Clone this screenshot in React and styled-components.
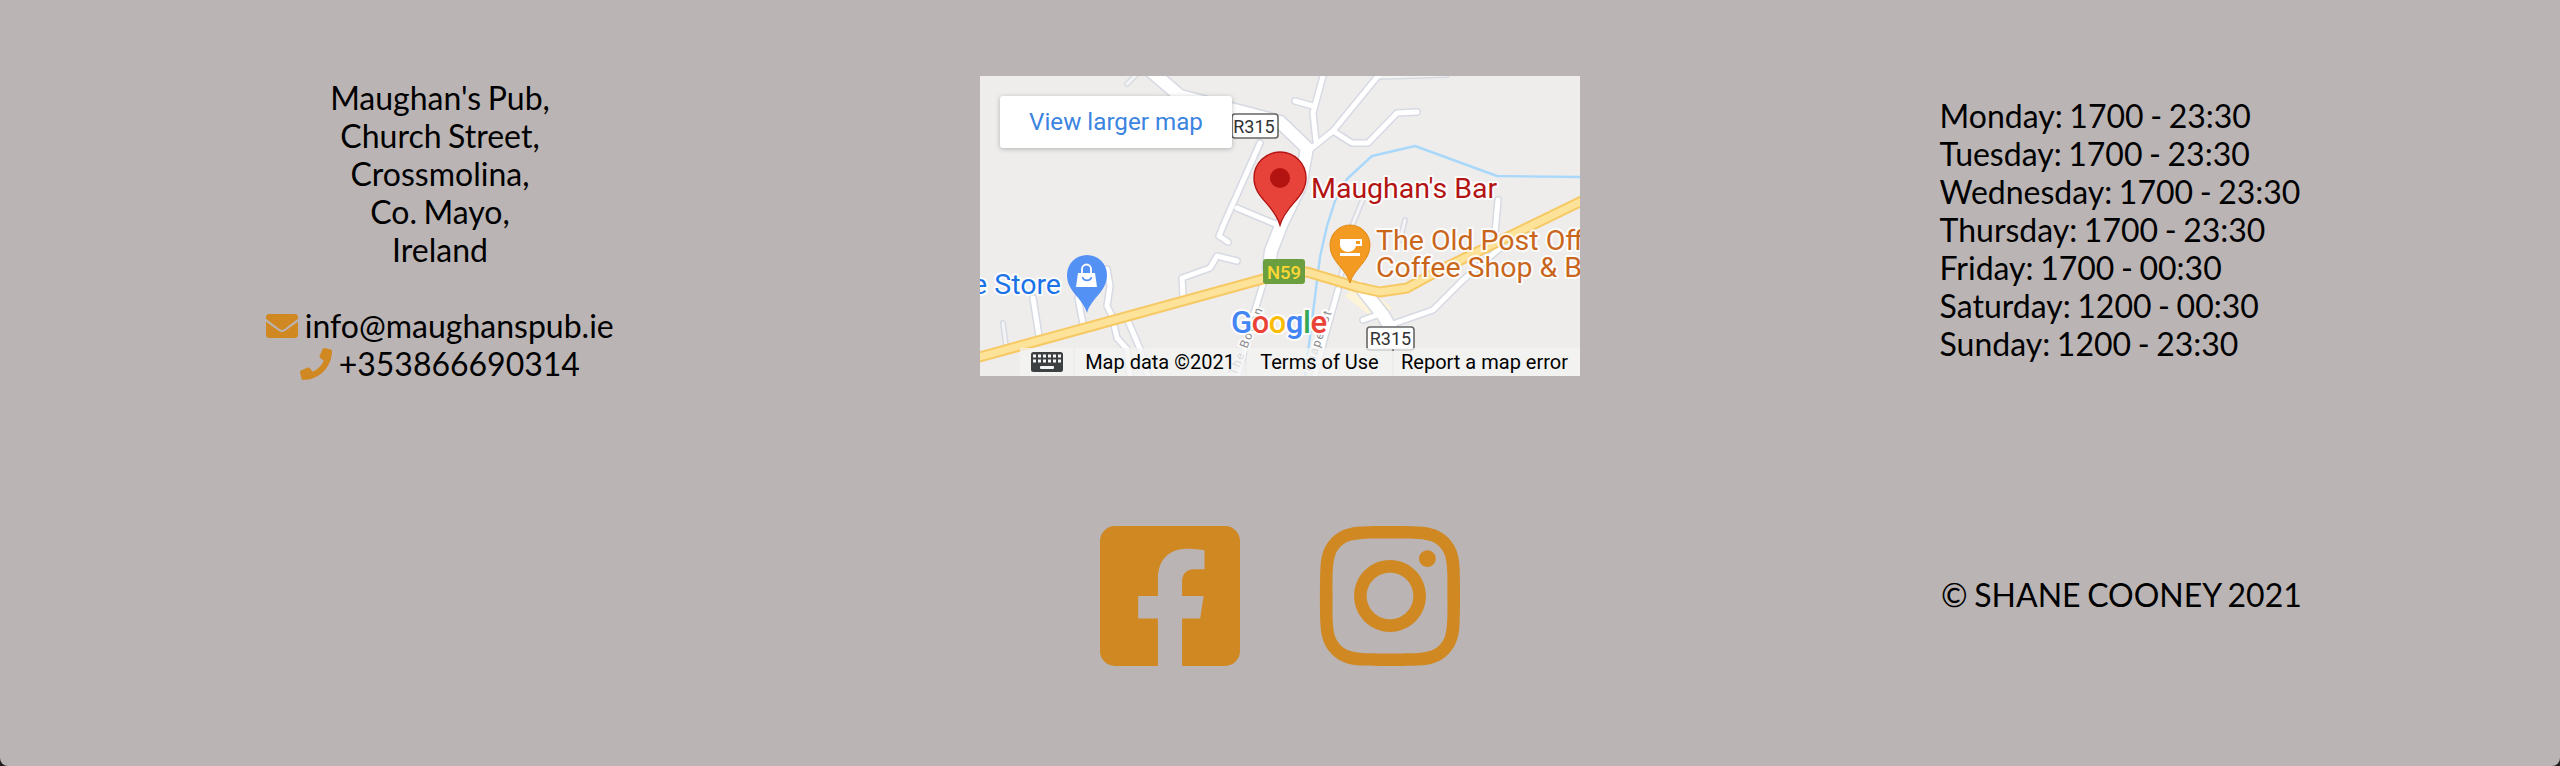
import React from 'react';
import styled, { createGlobalStyle } from 'styled-components';
import { FaEnvelope, FaPhone, FaFacebookSquare, FaInstagram } from 'react-icons/fa';

const GlobalStyle = createGlobalStyle`
  html, body {
    margin: 0;
    padding: 0;
    background: #1f1d1d;
  }
`;

const Footer = styled.footer`
  box-sizing: border-box;
  height: 766px;
  padding: 74px 20px 0;
  background: #bab4b4;
  border-radius: 0 0 8px 8px;
  overflow: hidden;
  color: #000;
  font-family: Lato, "Open Sans", sans-serif;
  font-size: 32px;
  line-height: 38px;
  word-spacing: -1.6px;
  display: grid;
  grid-template-columns: repeat(3, 840px);
  grid-template-rows: 304px 160px;
  row-gap: 138px;
`;

const Column = styled.div`
  display: flex;
  align-items: center;
  justify-content: center;
`;

const Contact = styled.div`
  text-align: center;
  padding-top: 9px;
`;

const Address = styled.address`
  font-style: normal;
  margin-bottom: 38px;
`;

const ContactRow = styled.div`
  svg {
    color: #d08823;
    vertical-align: -0.125em;
  }
`;

const Hours = styled.div`
  text-align: left;
  padding-top: 8px;
`;

const Copyright = styled.div`
  width: 358px;
  white-space: nowrap;
  padding-bottom: 3px;
`;

const Socials = styled.div`
  display: flex;
  gap: 60px;
  color: #d08823;
`;

const MapFrame = styled.div`
  position: relative;
  width: 600px;
  height: 300px;
  background: #eeedec;
  overflow: hidden;
  word-spacing: normal;
  svg {
    display: block;
  }
`;

const LargerMap = styled.a`
  position: absolute;
  left: 20px;
  top: 20px;
  width: 232px;
  height: 52px;
  display: flex;
  align-items: center;
  justify-content: center;
  background: #fff;
  border-radius: 3px;
  box-shadow: 0 1px 5px rgba(0, 0, 0, 0.25);
  color: #3b84df;
  font: 400 24.2px/1 Roboto, sans-serif;
`;

const Attribution = styled.div`
  position: absolute;
  left: 40px;
  right: 0;
  bottom: 0;
  height: 28px;
  display: flex;
  gap: 2px;
  font: 400 20px/28px Roboto, sans-serif;
  color: #000;
`;

const AttributionItem = styled.span`
  box-sizing: border-box;
  display: flex;
  align-items: center;
  justify-content: center;
  width: ${(p) => p.$width}px;
  padding-right: ${(p) => p.$inset || 0}px;
  background: rgba(243, 243, 243, 0.75);
  white-space: nowrap;
`;

const MapLabel = styled.text`
  font-family: Roboto, sans-serif;
  font-size: ${(p) => p.$size || 28.5}px;
  font-weight: ${(p) => p.$weight || 400};
  fill: ${(p) => p.$color};
  stroke: #fff;
  stroke-width: 4px;
  stroke-opacity: 0.85;
  stroke-linejoin: round;
  paint-order: stroke;
`;

const ShieldText = styled.text`
  font-family: Roboto, sans-serif;
  font-size: ${(p) => p.$size}px;
  font-weight: ${(p) => p.$weight || 400};
  fill: ${(p) => p.$color};
  text-anchor: middle;
`;

const hours = [
  'Monday: 1700 - 23:30',
  'Tuesday: 1700 - 23:30',
  'Wednesday: 1700 - 23:30',
  'Thursday: 1700 - 23:30',
  'Friday: 1700 - 00:30',
  'Saturday: 1200 - 00:30',
  'Sunday: 1200 - 23:30',
];

const wideRoads = [
  '172,-4 200,20 270,38 300,46 327,72 320,110 302,147 291,175 289,192',
  '383,214 403,239 416,262',
];

const roads = [
  '343,0 333,37 336,65',
  '315,25 333,30',
  '398,0 353,55 328,75',
  '353,55 372,67 388,67 417,37 437,36',
  '280,67 243,150 239,160 248,166',
  '257,132 300,150',
  '203,220 202,202 230,192 237,180 257,185',
  '127,193 130,210 127,230 132,240 137,262 147,273 150,300',
  '148,245 160,273 168,300',
  '53,222 59,260',
  '98,222 103,248',
  '410,249 453,234 483,204 520,172',
  '518,124 515,157',
  '383,244 397,239',
  '283,208 270,250 258,300',
  '358,214 345,260 335,300',
];

const faintRoads = [
  '147,8 157,-2',
  '23,247 26,270',
  '425,144 420,164',
  '383,123 372,150 358,214',
  '398,1 467,-1',
];

const highway = '-4,282 283,203 327,196 377,211 400,216 427,212 460,194 604,124';
const river = '347,150 355,125 367,103 392,80 435,70 517,100 600,101';
const riverSouth = '347,150 340,181 325,300';

const MapDrawing = () => (
  <svg width="600" height="300" viewBox="0 0 600 300">
    <polygon points="365,220 380,204 412,232 398,246" fill="#fdf3d8" />
    <g fill="none" stroke="#a9d8fb" strokeWidth="2.4" strokeLinejoin="round">
      <polyline points={river} />
      <polyline points={riverSouth} />
    </g>
    <g fill="none" stroke="#d7dae3" strokeLinecap="round" strokeLinejoin="round">
      {faintRoads.map((r) => <polyline key={r} points={r} strokeWidth="6" />)}
      {roads.map((r) => <polyline key={r} points={r} strokeWidth="8" />)}
      {wideRoads.map((r) => <polyline key={r} points={r} strokeWidth="15" />)}
    </g>
    <g fill="none" stroke="#fff" strokeLinecap="round" strokeLinejoin="round">
      {faintRoads.map((r) => <polyline key={r} points={r} strokeWidth="3" stroke="#f4f4f5" />)}
      {roads.map((r) => <polyline key={r} points={r} strokeWidth="5" />)}
      {wideRoads.map((r) => <polyline key={r} points={r} strokeWidth="12" />)}
    </g>
    <g fill="none" strokeLinejoin="round">
      <polyline points={highway} stroke="#f7c964" strokeWidth="11" />
      <polyline points={highway} stroke="#fde39a" strokeWidth="7" />
    </g>

    <MapLabel $size={12} $color="#8b8b8b" transform="translate(256 300) rotate(-68)" letterSpacing="1.5">The Bowen</MapLabel>
    <MapLabel $size={12} $color="#8b8b8b" transform="translate(331 296) rotate(-71)" letterSpacing="1.5">Chapel St</MapLabel>

    <rect x="252" y="38" width="46" height="24" rx="3" fill="#fff" stroke="#666" strokeWidth="1.6" />
    <ShieldText x="274" y="56.5" $size={18} $color="#333">R315</ShieldText>
    <rect x="387" y="251" width="47" height="23" rx="3" fill="#fff" stroke="#666" strokeWidth="1.6" />
    <ShieldText x="410.5" y="269" $size={18} $color="#333">R315</ShieldText>
    <rect x="283" y="183" width="42" height="25" rx="3" fill="#6a9e3f" />
    <ShieldText x="304" y="202.5" $size={18.5} $weight={500} $color="#fdd835">N59</ShieldText>

    {/* red place pin */}
    <path d="M300 149C294 128 274 122 274 102A26 26 0 1 1 326 102C326 122 306 128 300 149Z" fill="#e8433b" stroke="#b31412" strokeWidth="1.4" />
    <circle cx="300" cy="102" r="10" fill="#b31412" />
    <MapLabel x="331" y="122" $color="#b31412">Maughan's Bar</MapLabel>

    {/* cafe pin */}
    <path d="M370 207C366 192 350 186 350 169A20 20 0 1 1 390 169C390 186 374 192 370 207Z" fill="#f29a21" stroke="#e08a17" strokeWidth="1" />
    <path d="M360 163H376V169C376 173 372 176 368 176C364 176 360 173 360 169Z" fill="#fff" />
    <path d="M376 163H382V170H375V168H380V165H376Z" fill="#fff" />
    <rect x="360" y="177" width="20" height="3" fill="#fff" />
    <MapLabel x="396" y="174" $color="#c9661b">The Old Post Office</MapLabel>
    <MapLabel x="396" y="201" $color="#c9661b">Coffee Shop &amp; Bar</MapLabel>

    {/* shop pin */}
    <path d="M107 237C103 222 87 216 87 199A20 20 0 1 1 127 199C127 216 111 222 107 237Z" fill="#5491f5" />
    <path d="M98 197H115L117 211H96Z" fill="#fff" />
    <path d="M102 197V193A4.500 4.500 0 0 1 111 193V197" fill="none" stroke="#fff" strokeWidth="1.8" />
    <path d="M102.500 201C103.500 205.500 110.500 205.500 111.500 201" fill="none" stroke="#5491f5" strokeWidth="1.6" />
    <MapLabel x="81" y="218" textAnchor="end" $color="#1a73e8">e Store</MapLabel>

    <MapLabel x="251" y="257" textLength="96" $size={31} $weight={500} $color="#4285f4">
      G<tspan fill="#ea4335">o</tspan><tspan fill="#fbbc05">o</tspan><tspan fill="#4285f4">g</tspan><tspan fill="#34a853">l</tspan><tspan fill="#ea4335">e</tspan>
    </MapLabel>
  </svg>
);

const KeyboardIcon = () => (
  <svg width="32" height="20" viewBox="0 0 32 20">
    <rect width="32" height="20" rx="2.500" fill="#3c4043" />
    <g fill="#f5f5f5">
      {[3, 8, 13, 18, 23, 28].map((x) => <rect key={x} x={x - 1} y="2.500" width="3" height="3" />)}
      {[3, 8, 13, 18, 23, 28].map((x) => <rect key={x} x={x - 1} y="7.500" width="3" height="3" />)}
      <rect x="9" y="14" width="14" height="3" rx="1" />
    </g>
  </svg>
);

const App = () => (
  <>
    <GlobalStyle />
    <Footer>
      <Column>
        <Contact>
          <Address>
            Maughan's Pub,<br />
            Church Street,<br />
            Crossmolina,<br />
            Co. Mayo,<br />
            Ireland
          </Address>
          <ContactRow><FaEnvelope size={32} /> info@maughanspub.ie</ContactRow>
          <ContactRow><FaPhone size={32} /> +353866690314</ContactRow>
        </Contact>
      </Column>
      <Column>
        <MapFrame>
          <MapDrawing />
          <LargerMap>View larger map</LargerMap>
          <Attribution>
            <AttributionItem $width={53}><KeyboardIcon /></AttributionItem>
            <AttributionItem $width={170}>Map data ©2021</AttributionItem>
            <AttributionItem $width={145}>Terms of Use</AttributionItem>
            <AttributionItem $width={186} $inset={5}>Report a map error</AttributionItem>
          </Attribution>
        </MapFrame>
      </Column>
      <Column>
        <Hours>
          {hours.map((line) => <div key={line}>{line}</div>)}
        </Hours>
      </Column>
      <Column />
      <Column>
        <Socials>
          <FaFacebookSquare size={160} />
          <FaInstagram size={160} />
        </Socials>
      </Column>
      <Column>
        <Copyright>© SHANE COONEY 2021</Copyright>
      </Column>
    </Footer>
  </>
);

export default App;
